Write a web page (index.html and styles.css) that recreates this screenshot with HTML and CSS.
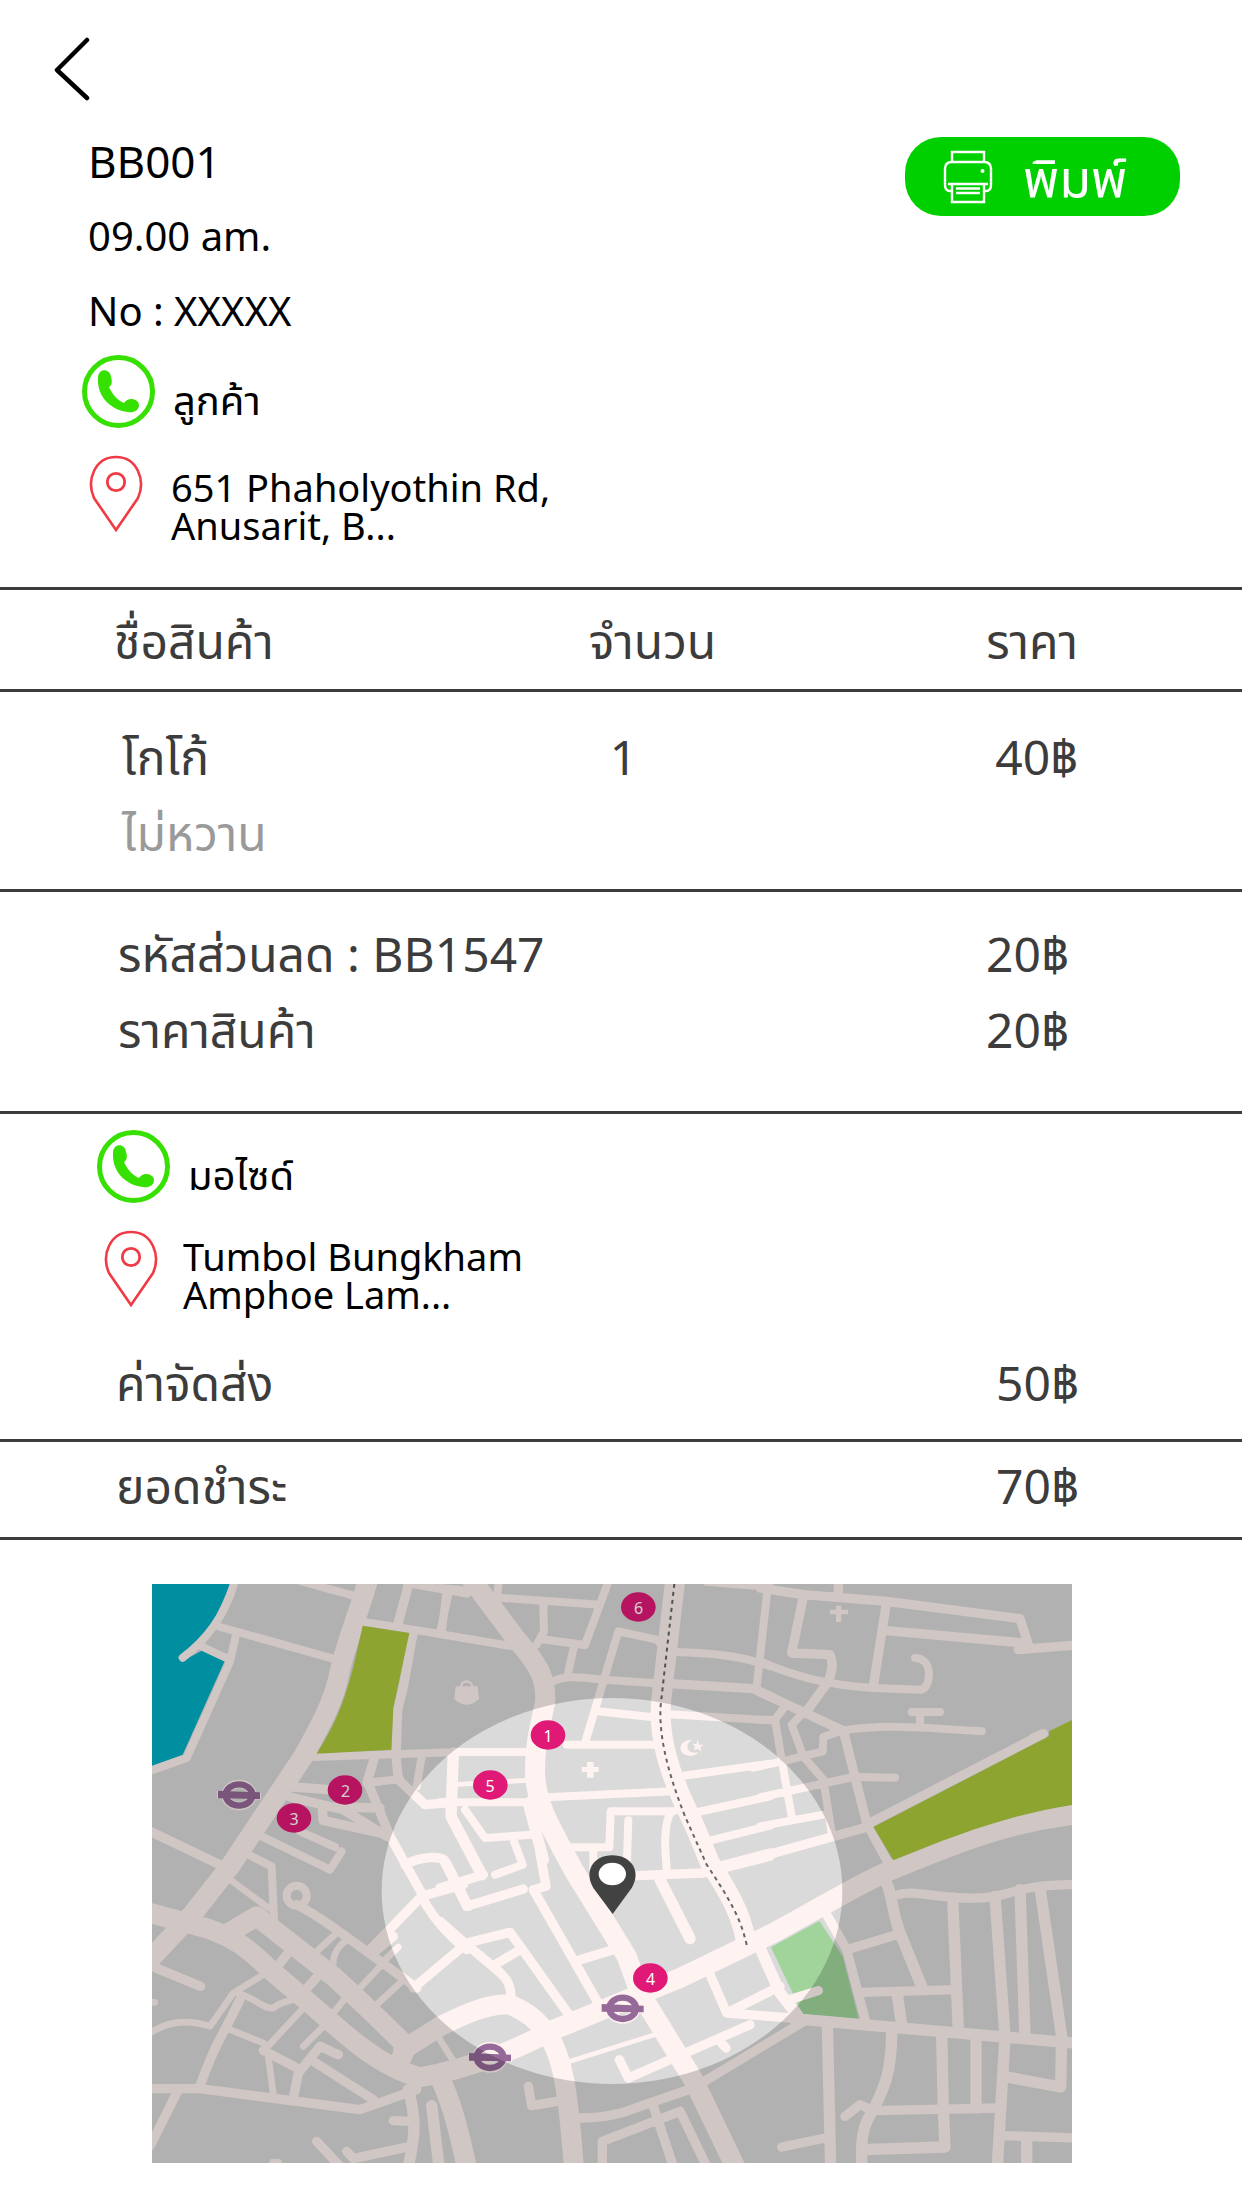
FILE: index.html
```html
<!DOCTYPE html>
<html lang="th">
<head>
<meta charset="utf-8">
<meta name="viewport" content="width=device-width, initial-scale=1">
<title>BB001</title>
<link rel="stylesheet" href="styles.css">
</head>
<body>
<svg class="sprite" aria-hidden="true">
  <symbol id="phone" viewBox="0 0 73 73">
    <circle cx="36.500" cy="36.500" r="34" fill="none" stroke="#36e000" stroke-width="5"/>
    <path d="M16 23C16 13 28 13 29 22C31 28 29 31 27 32C30 39 35 45 42 48C46 41 57 44 57 50C57 56 51 58 46 57C28 55 15 41 16 23Z" fill="#36e000"/>
  </symbol>
  <symbol id="place" viewBox="0 0 54 77">
    <path d="M27 75L5 43C-3 25 6 2 27 2S57 25 49 43Z" fill="none" stroke="#f03a45" stroke-width="2.600"/>
    <circle cx="27" cy="27" r="8.700" fill="none" stroke="#f03a45" stroke-width="2.800"/>
  </symbol>
  <symbol id="station" viewBox="-70 -50 140 100" overflow="visible">
    <ellipse rx="40" ry="33" fill="none" stroke="#fff3f1" stroke-width="26"/>
    <path d="M-66-12L66-8V14L-66 10Z" fill="#fff3f1"/>
    <ellipse rx="40" ry="32" fill="none" stroke="#956998" stroke-width="19"/>
    <path d="M-63-13L63-8V12L-63 10Z" fill="#956998"/>
  </symbol>
</svg>

<header class="topbar">
  <a class="back" href="#" aria-label="Back">
    <svg viewBox="0 0 36 64"><path d="M33 3L3 33L33 61" fill="none" stroke="#000" stroke-width="4.500" stroke-linecap="round" stroke-linejoin="round"/></svg>
  </a>
</header>

<main>
  <section class="order">
    <div class="order-info">
      <h1 class="order-code">BB001</h1>
      <p class="meta">09.00 am.</p>
      <p class="meta">No : XXXXX</p>
    </div>
    <button class="print" type="button">
      <svg class="print-icon" viewBox="0 0 50 54" fill="none" stroke="#fff" stroke-width="2.400">
        <path d="M9 12V2H41V12M9 41H7Q2 41 2 35V19Q2 12 9 12H41Q48 12 48 19V35Q48 41 43 41H41M5 34H45M9 34V52H41V34M13 38.500H37M13 43H37"/>
        <circle cx="39.500" cy="21" r="2" fill="#fff" stroke="none"/>
      </svg>
      <span>พิมพ์</span>
    </button>
  </section>

  <section class="contact customer">
    <a class="call" href="#"><svg class="phone"><use href="#phone"/></svg><span>ลูกค้า</span></a>
    <div class="place"><svg class="pin"><use href="#place"/></svg><address>651 Phaholyothin Rd,<br>Anusarit, B...</address></div>
  </section>

  <table class="items">
    <colgroup><col class="col-name"><col class="col-qty"><col></colgroup>
    <thead><tr><th scope="col">ชื่อสินค้า</th><th scope="col">จำนวน</th><th scope="col">ราคา</th></tr></thead>
    <tbody><tr><td>โกโก้<p class="note">ไม่หวาน</p></td><td>1</td><td>40฿</td></tr></tbody>
  </table>

  <dl class="sums discount">
    <div><dt>รหัสส่วนลด : BB1547</dt><dd>20฿</dd></div>
    <div><dt>ราคาสินค้า</dt><dd>20฿</dd></div>
  </dl>

  <section class="contact rider">
    <a class="call" href="#"><svg class="phone"><use href="#phone"/></svg><span>มอไซด์</span></a>
    <div class="place"><svg class="pin"><use href="#place"/></svg><address>Tumbol Bungkham<br>Amphoe Lam...</address></div>
  </section>

  <dl class="sums fee"><div><dt>ค่าจัดส่ง</dt><dd>50฿</dd></div></dl>
  <dl class="sums total"><div><dt>ยอดชำระ</dt><dd>70฿</dd></div></dl>

  <figure class="map">
    <svg viewBox="36 43 2760 1737" role="img" aria-label="Map">
      <rect x="36" y="43" width="2760" height="1737" fill="#dadada"/>
      <path d="M36 42H270C240 120 215 170 185 205L150 262L188 242L255 272L128 555L36 588Z" fill="#00b0c4"/>
      <!-- avenues -->
      <g class="road w60">
        <path d="M684 30C660 120 625 200 600 300C585 390 540 470 490 560L270 890L160 1030L20 1180"/>
        <path d="M980 10L1130 210C1200 290 1220 330 1215 400C1200 470 1185 520 1185 600C1185 700 1230 770 1300 900L1460 1160L1500 1270L1660 1530L1790 1800"/>
        <path d="M1607 20L1565 380C1550 500 1590 620 1660 760L1710 880C1760 960 1800 1020 1817 1110"/>
        <path d="M830 1525C1000 1495 1150 1430 1230 1385L1620 1225L1900 1090C2100 980 2200 920 2280 890C2450 820 2600 760 2800 735"/>
        <path d="M790 1440L900 1370C980 1330 1050 1300 1110 1305C1160 1325 1190 1350 1220 1390C1270 1460 1285 1570 1302 1800"/>
        <path d="M30 1030L160 1065C270 1090 330 1140 390 1200L520 1310C620 1400 720 1490 830 1520"/>
        <path d="M265 1090L350 1040L580 1220C680 1310 740 1370 800 1430L775 1485"/>
        <path d="M900 1525C940 1610 960 1700 982 1800"/>
      </g>
      <!-- north west -->
      <g class="road w24">
        <path d="M284 36C260 120 215 200 128 264M188 232L265 268M288 195L270 275L140 565L30 604M240 172L590 270M480 34L640 78M660 155L820 180L1130 232M928 60L900 190M800 40L980 72M520 562L960 547H1160M845 560L830 650M480 785L585 832M365 800L570 900L605 845M325 855L395 890L402 1050M680 640L780 628"/>
      </g>
      <g class="road w28">
        <path d="M808 36L773 165M820 185L790 350L773 420L768 560L775 630L855 705L940 698M703 565L682 635L750 800L850 980M460 652L600 662M450 682L610 720L740 800M590 712L720 715M547 710L549 752L720 790M30 785L260 895M795 885C840 860 910 855 920 880L985 1010"/>
      </g>
      <path d="M668 168L808 190L760 415L754 540L530 552C600 440 625 370 668 168Z" fill="#aec93d"/>
      <!-- north -->
      <g transform="translate(900 0)">
        <g class="road w24">
          <path d="M0 55L110 65M150 82L480 105M176 36L172 80M310 105L312 185L290 225M505 36L435 226L300 208M402 230L382 320M20 60L5 190M340 335C380 315 430 325 490 330L640 340M435 520L535 185L650 210L675 235M700 247C800 250 900 255 990 290M985 36L950 350M800 36L990 52M690 434L990 452M475 425L640 443M380 525H650M320 683L700 665M0 698H270M720 620L990 582M760 730L990 680M800 815L990 768M830 890L990 848M700 725H512L508 833H390M565 752L560 900M690 730C670 780 675 830 680 900M460 835V900M75 720L135 805L275 795M222 815L248 885L165 915"/>
        </g>
        <path class="road w14" d="M40 645L260 632"/>
        <path class="road w28" d="M690 342L940 357L1000 385"/>
        <path class="road w34" d="M40 550L33 740L125 915M265 700L310 870"/>
      </g>
      <!-- north east -->
      <g transform="translate(1860 0)">
        <g class="road w24">
          <path d="M0 275C100 320 200 345 340 355L485 360C515 350 520 265 465 265M250 483C350 465 450 470 665 485M455 427H540M480 430V470M290 622L405 624M240 485L190 502L188 545L80 572L-20 594M0 450H45M0 683L280 622M0 770L190 735M130 430L95 465L130 560L190 630L215 790M75 410L45 450L65 570L95 740"/>
        </g>
        <g class="road w28">
          <path d="M0 55L130 75L380 95L780 147L805 225M130 80L95 250L210 255C225 290 210 320 205 335L140 425M235 36V80M380 95L340 350M380 183L790 220M775 240L940 227M0 862L330 770M320 765L850 492M0 367L250 483L320 760L390 890"/>
        </g>
        <path d="M940 449V705C750 735 600 790 400 872L340 772L867 500V485Z" fill="#aec93d"/>
        <path class="road w28" d="M820 505L850 492"/>
      </g>
      <!-- south west -->
      <g transform="translate(0 870)">
        <circle cx="470" cy="108" r="30" fill="none" stroke="#fff3f1" stroke-width="24"/>
        <g class="road w28">
          <path d="M470 135C520 160 560 190 590 210L700 290L830 385M690 270L845 110L970 75M845 110C880 180 930 230 980 270M820 385L975 255M400 335L460 260M480 410L550 330M36 320L182 380M300 420L260 500C220 570 200 620 180 680M370 572L480 630M460 715L475 640L540 560L595 585M520 605L700 720M30 687L180 687L660 750L830 690M115 690L30 860M760 783L810 785M530 845L600 920M620 875L640 897L810 860M700 280L760 230"/>
        </g>
        <g class="road w20">
          <path d="M525 280L590 220M580 310C580 270 610 250 620 240M660 385L730 310M710 435L780 370M270 60L385 145M30 520C90 480 150 480 210 500L280 400L370 345M290 400C340 410 370 450 400 445C430 420 450 430 480 410M490 445L370 575M490 560L550 500M270 510L370 550M385 590L400 705M580 460L620 410M900 540L950 620M725 310L775 262M36 428H44M398 908H415"/>
        </g>
        <path class="road w34" d="M805 690C830 780 825 830 805 920M875 738L897 920"/>
      </g>
      <!-- south -->
      <g transform="translate(900 870)">
        <g class="road w28">
          <path d="M10 0L80 140L250 88M0 85L130 45M300-20L318 80L280 90L480 440M0 185L80 255L170 330C220 370 210 400 215 430M80 250L210 218L390 470M165 315L240 270M420 300L520 270M590 48L790 40L990-10M538 600L565 655L930 495M840 545L858 565M808 340L860 460L1080 477M870 455L1020 380M265 680L275 738L370 722M420 775C500 775 550 760 600 740L760 685L1100 480M487 920V845L720 755L800 920M640 740L700 920"/>
        </g>
        <path class="road w34" d="M660 60L750 237"/>
        <path class="road w14" d="M390 605L660 520"/>
      </g>
      <!-- south east -->
      <g transform="translate(1860 870)">
        <path d="M33 263L178 184L248 290L296 478L128 464Z" fill="#a0d49a"/>
        <g class="road w28">
          <path d="M95 418L175 393M200 165L260 270L318 490M260 270L410 225M305 398L590 390M415 105C460 90 520 115 620 115C760 120 740 75 940 75M255 770L300 735L340 753L720 745M65 862L210 832M735 828L940 835"/>
        </g>
        <g class="road w34">
          <path d="M0 265L60 400L115 470M370 50C400 100 390 140 420 220L487 385M412 405L425 495M100 477L940 550M578 115L595 510M705 110L735 530L712 920M780 90L795 530M840 85L905 530L902 682L740 652M202 490L212 920M395 520C395 640 370 690 340 750C300 810 305 850 305 920M545 520L550 750L555 862L310 870M648 540V745M800 840V920"/>
        </g>
      </g>
      <!-- railway -->
      <path d="M1603 43L1565 380C1550 480 1580 600 1635 740L1700 885C1770 990 1805 1050 1822 1135" fill="none" stroke="#666" stroke-width="6" stroke-dasharray="12 12"/>
      <!-- landmarks -->
      <g fill="#fff3f1">
        <path d="M947 350H1013L1017 388Q1000 405 980 405T943 388Z"/>
        <path d="M963 352C963 330 997 330 997 352" fill="none" stroke="#fff3f1" stroke-width="7"/>
        <path d="M1341 577H1361V592H1376V607H1361V624H1341V607H1325V592H1341ZM2088 108H2104V120H2124V134H2104V157H2088V134H2070V120H2088Z"/>
        <path d="M1657 510C1610 510 1610 560 1655 558Q1670 557 1675 548C1635 555 1635 520 1657 510ZM1673 511L1678 525L1691 525L1681 533L1684 545L1673 537L1660 542L1666 531L1658 522L1669 523Z"/>
      </g>
      <use href="#station" x="227" y="626" width="140" height="100"/>
      <use href="#station" x="1378" y="1266" width="140" height="100"/>
      <use href="#station" x="980" y="1413" width="140" height="100"/>
      <g class="stop">
        <ellipse cx="615" cy="661" rx="52" ry="44"/><text x="617" y="681">2</text>
        <ellipse cx="462" cy="745" rx="52" ry="44"/><text x="462" y="765">3</text>
        <ellipse cx="1495" cy="112" rx="52" ry="44"/><text x="1496" y="132">6</text>
        <ellipse cx="1224" cy="496" rx="52" ry="44"/><text x="1224" y="516">1</text>
        <ellipse cx="1051" cy="646" rx="52" ry="44"/><text x="1050" y="666">5</text>
        <ellipse cx="1531" cy="1225" rx="52" ry="44"/><text x="1532" y="1245">4</text>
      </g>
      <path d="M1418 1033L1360 955C1330 905 1360 857 1417 857S1505 905 1475 955Z" fill="#424242"/>
      <ellipse cx="1417" cy="913" rx="41" ry="34" fill="#fff"/>
      <!-- everything outside the delivery zone is dimmed -->
      <path d="M36 43H2796V1780H36ZM725 964A691 579 0 1 0 2107 964A691 579 0 1 0 725 964Z" fill-rule="evenodd" fill-opacity=".183"/>
    </svg>
  </figure>
</main>
</body>
</html>
```
FILE: styles.css
```css
* { box-sizing: border-box; }
body {
  margin: 0;
  background: #fff;
  color: #000;
  font-family: "Noto Sans", "Noto Sans Thai", sans-serif;
  font-size: 48px;
  line-height: 60px;
}
h1, p, dl, dd, figure { margin: 0; }
a { color: inherit; text-decoration: none; }
svg { display: block; }
.sprite { position: absolute; width: 0; height: 0; }

.topbar { padding: 37px 54px 0; }
.back { display: block; width: 36px; }
.back svg { width: 36px; height: 64px; }

.order {
  display: flex;
  justify-content: space-between;
  align-items: flex-start;
  padding: 30px 62px 0 88px;
}
.order-info { display: grid; gap: 15px; }
.order-code { font-size: 44px; font-weight: 400; }
.meta { font-size: 40px; }
.print {
  display: flex;
  align-items: center;
  gap: 30px;
  width: 275px;
  height: 79px;
  margin-top: 6px;
  padding: 0 38px;
  border: 0;
  border-radius: 36px;
  background: #00cf00;
  color: #fff;
  font: inherit;
  font-size: 52px;
}
.print-icon { width: 50px; height: 54px; flex: none; }

.contact { font-size: 38px; line-height: 38px; }
.customer { padding: 14px 62px 43px 82px; }
.rider { padding: 16px 62px 0 97px; }
.call { display: flex; align-items: flex-end; gap: 18px; font-size: 40px; }
.call span { padding-bottom: 9px; }
.phone { width: 73px; height: 73px; }
.place { display: flex; gap: 28px; margin-top: 27px; padding-left: 7px; }
.rider .place { gap: 25px; }
.pin { width: 54px; height: 77px; flex: none; }
address { font-style: normal; padding-top: 13px; }
.rider address { padding-top: 7px; }

.items {
  width: 100%;
  table-layout: fixed;
  border-collapse: collapse;
  color: #3c3c3c;
  text-align: left;
}
.col-name { width: 47%; }
.col-qty { width: 32%; }
.items th { height: 102px; padding: 2px 0 0 5px; border: solid #3c3c3c; border-width: 3px 0; font-weight: 400; }
.items td { padding: 35px 0 26px 14px; vertical-align: top; }
.items td:nth-child(2) { padding-left: 26px; }
.items th:first-child { padding-left: 114px; }
.items td:first-child { padding-left: 122px; }
.note { margin-top: 16px; color: #9a9a9a; }

.sums { color: #3c3c3c; }
.sums div { display: grid; grid-template-columns: 1fr 128px; }
.discount { display: grid; gap: 16px; padding: 32px 128px 51px 118px; border: solid #3c3c3c; border-width: 3px 0; }
.fee { padding: 40px 118px 26px 116px; border-bottom: 3px solid #3c3c3c; }
.total { padding: 14px 118px 21px 116px; border-bottom: 3px solid #3c3c3c; }

.map { padding: 44px 170px 45px 152px; }
.map > svg { width: 100%; height: auto; }
.road { fill: none; stroke: #fff3f1; stroke-linecap: round; stroke-linejoin: round; }
.w14 { stroke-width: 14px; }
.w20 { stroke-width: 20px; }
.w24 { stroke-width: 24px; }
.w28 { stroke-width: 28px; }
.w34 { stroke-width: 34px; }
.w60 { stroke-width: 60px; }
.stop ellipse { fill: #e01977; }
.stop text { fill: #fff; font-size: 48px; text-anchor: middle; }
```
